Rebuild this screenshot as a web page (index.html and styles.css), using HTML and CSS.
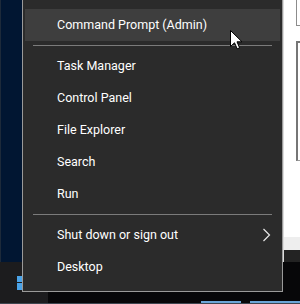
FILE: index.html
```html
<!DOCTYPE html>
<html lang="en">
<head>
    <meta charset="UTF-8">
    <title>Power User Menu</title>
    <link rel="stylesheet" href="styles.css">
</head>
<body>
    <div id="screen">
        <div class="desktop">
            <div class="leftside"></div>
            <div class="middle"></div>
            <div class="rightside">
                <div class="box1"></div>
                <div class="box2"></div>
                <div class="fill-white"></div>
                <div class="fill-light"></div>
                <div class="fill-dark"></div>
            </div>
        </div>
        <div class="taskbar">
            <div class="start">
                <svg class="winlogo" width="16" height="14" viewBox="0 0 16 14">
                    <rect x="0" y="0" width="7" height="6" fill="#4aa3e8"/>
                    <rect x="8" y="0" width="8" height="6" fill="#4aa3e8"/>
                    <rect x="0" y="7" width="7" height="7" fill="#4aa3e8"/>
                    <rect x="8" y="7" width="8" height="7" fill="#4aa3e8"/>
                </svg>
            </div>
            <div class="tasks">
                <span class="run1"></span>
                <span class="run2"></span>
            </div>
        </div>

        <div id="menu">
            <div class="item hover">Command Prompt (Admin)</div>
            <div class="sep"></div>
            <div class="item">Task Manager</div>
            <div class="item">Control Panel</div>
            <div class="item">File Explorer</div>
            <div class="item">Search</div>
            <div class="item">Run</div>
            <div class="sep"></div>
            <div class="item">Shut down or sign out
                <svg class="chev" width="9" height="14" viewBox="0 0 9 14">
                    <path d="M1.5 1 L7.5 7 L1.5 13" fill="none" stroke="#e8e8e8" stroke-width="1.2"/>
                </svg>
            </div>
            <div class="item">Desktop</div>
        </div>

        <svg id="cursor" width="13" height="20" viewBox="0 0 13 20">
            <path d="M0.5 0.5 V16.5 L4.5 12.8 L7.2 18.8 L9.6 17.8 L7 11.8 H12 Z" fill="#fff" stroke="#000" stroke-width="1"/>
        </svg>
    </div>
</body>
</html>
```

FILE: styles.css
```css
*{
    padding: 0;
    margin: 0;
    box-sizing: border-box;
}
body{
    background: #000;
    font-family: Roboto, "Noto Sans", sans-serif;
}
#screen{
    width: 300px;
    height: 304px;
    position: relative;
    overflow: hidden;
}
.desktop{
    display: flex;
    height: 262px;
}
.leftside{
    width: 22px;
    background: #011632;
    border-left: 1px solid #1d2a3a;
}
.middle{
    flex: 1;
    background: #2b2b2b;
}
.rightside{
    width: 17px;
    display: flex;
    flex-direction: column;
    background: #fff;
    border-left: 1px solid #dcdcdc;
}
.box1{
    height: 26px;
    margin-left: 12px;
    border-left: 1px solid #8c8c8c;
    border-bottom: 1px solid #8c8c8c;
}
.box2{
    height: 120px;
    margin-top: 15px;
    margin-left: 12px;
    border-left: 2px solid #767676;
    border-top: 2px solid #767676;
    border-bottom: 1px solid #9a9a9a;
}
.fill-white{
    flex: 1;
}
.fill-light{
    height: 13px;
    background: #eeeeee;
}
.fill-dark{
    height: 12px;
    background: #232323;
}
.taskbar{
    display: flex;
    height: 42px;
    background: #070709;
    border-bottom: 1px solid #3e4650;
}
.start{
    width: 48px;
    background: #1c1c1e;
    padding: 14px 0 0 17px;
}
.winlogo{
    display: block;
}
.tasks{
    flex: 1;
    position: relative;
}
.run1, .run2{
    position: absolute;
    bottom: 0;
    height: 2px;
    background: #6aa6d8;
}
.run1{
    left: 153px;
    width: 40px;
}
.run2{
    left: 202px;
    width: 50px;
}
#menu{
    position: absolute;
    left: 22px;
    top: 0;
    width: 261px;
    background: #2b2b2b;
    border: 1px solid #9a9a9a;
    border-top: none;
    padding: 9px 2px 8px;
    color: #fff;
    font-size: 12.5px;
}
#menu .item{
    height: 32px;
    line-height: 32px;
    padding-left: 32px;
    display: flex;
    align-items: center;
    white-space: nowrap;
}
#menu .hover{
    background: #3e3e3e;
}
#menu .sep{
    height: 9px;
    padding-top: 4px;
    margin: 0 8px;
}
#menu .sep::after{
    content: '';
    display: block;
    height: 1px;
    background: #7b7b7b;
}
#menu .chev{
    margin-left: auto;
    margin-right: 9px;
}
#cursor{
    position: absolute;
    left: 230px;
    top: 30px;
}
```
